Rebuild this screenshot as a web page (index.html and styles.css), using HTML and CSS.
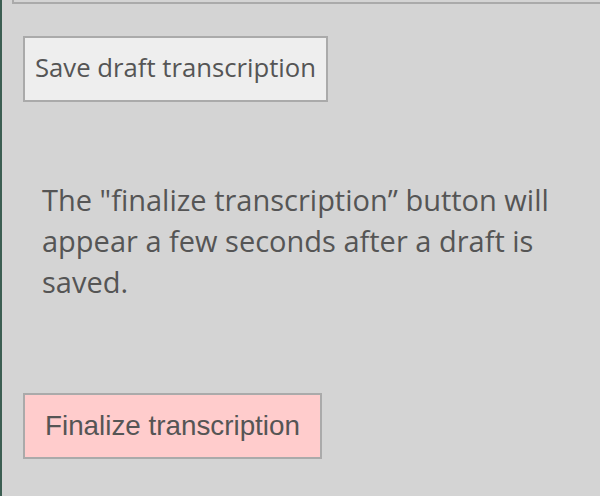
FILE: index.html
```html
<!DOCTYPE html>
<html>
<head>
<meta charset="utf-8">
<link rel="stylesheet" href="styles.css">
</head>
<body>
<div class="page">
  <div class="strip"></div>
  <main class="panel">
    <div class="topbox"></div>
    <button class="btn save">Save draft transcription</button>
    <p class="note">The "finalize transcription” button will appear a few seconds after a draft is saved.</p>
    <button class="btn finalize">Finalize transcription</button>
  </main>
</div>
</body>
</html>
```
FILE: styles.css
```css
html, body {
  margin: 0;
  padding: 0;
  background: #d4d4d4;
  overflow: hidden;
}
.page {
  display: flex;
  width: 600px;
  height: 496px;
  overflow: hidden;
}
.strip {
  width: 2px;
  flex: none;
  background: #3c5e52;
}
.panel {
  flex: 1;
  min-width: 0;
  padding-left: 21px;
  display: flex;
  flex-direction: column;
  align-items: flex-start;
  font-family: "Open Sans", sans-serif;
  color: #555;
}
.topbox {
  align-self: stretch;
  margin-left: -11px;
  margin-top: -10px;
  height: 10px;
  border: 2px solid #aaa;
  border-right: none;
  background: #d4d4d4;
}
.btn {
  margin: 0;
  border: 2px solid #aaa;
  height: 66px;
  color: #555;
  cursor: pointer;
}
.save {
  margin-top: 32px;
  background: #eeeeee;
  font-family: "Open Sans", sans-serif;
  font-size: 25.7px;
  padding: 0 10px 4px;
}
.note {
  margin: 77px 0 0 19px;
  width: 530px;
  font-size: 29px;
  line-height: 41px;
}
.finalize {
  margin-top: 91px;
  background: #ffcccc;
  font-family: "Liberation Sans", Arial, sans-serif;
  font-size: 27.8px;
  padding: 0 20px;
}
```
